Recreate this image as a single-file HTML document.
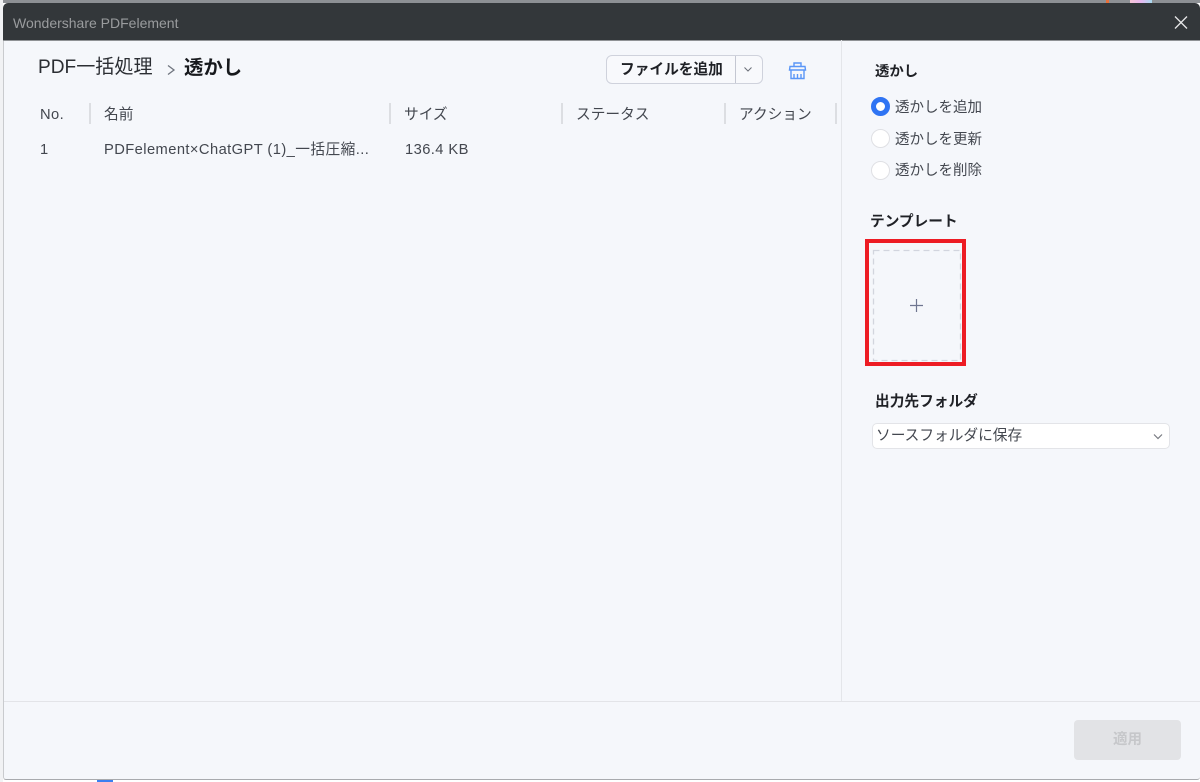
<!DOCTYPE html>
<html lang="ja"><head><meta charset="utf-8"><style>
html,body{margin:0;padding:0;background:#fff}
#r{position:relative;width:1200px;height:782px;overflow:hidden;background:#fff;font-family:"Liberation Sans","Noto Sans CJK JP",sans-serif}
#r div,#r svg{position:absolute}
.t{white-space:nowrap;line-height:20px;height:20px}
.g{color:#43474f;font-size:14.7px}
.l{letter-spacing:.43px}
.b{color:#1f2126;font-size:14.7px;font-weight:700}
.s{width:2px;height:21px;top:103px;background:#dcdee2}
.rd{left:871px;width:17px;height:17px;border-radius:50%;background:#fff;border:1px solid #dfe0e4}
</style></head><body><div id="r">
<div style="left:0;top:0;width:1200px;height:3px;background:#8d9094"></div>
<div style="left:1106px;top:0;width:3px;height:3px;background:#e8703a"></div>
<div style="left:1130px;top:0;width:22px;height:3px;background:linear-gradient(90deg,#f6c6d6,#e8b8f0,#a8dcf0)"></div>
<div style="left:0;top:58px;width:1px;height:34px;background:#3b7ff0"></div>
<div style="left:0;top:0;width:3px;height:782px;background:#f1f2f4"></div>
<div style="left:3px;top:3px;width:1197px;height:777px;background:#f5f7fb;border-left:1px solid #c9cbce;border-bottom:1px solid #a8aaae;box-sizing:border-box;border-radius:6px 6px 3px 3px;overflow:hidden"></div>
<div style="left:3px;top:3px;width:1197px;height:37px;background:#33373a;border-radius:5px 5px 0 0;border-bottom:1px solid #8f9295;box-sizing:content-box"></div>
<div class="t" style="left:13px;top:13px;color:#9a9c9e;font-size:14px">Wondershare PDFelement</div>
<svg style="left:1174px;top:16px" width="14" height="14" viewBox="0 0 14 14"><path d="M1 .5L13 12.5M13 .5L1 12.5" stroke="#e6e7e8" stroke-width="1.3" fill="none"/></svg>

<div class="t" style="left:38px;top:57px;color:#2b2e33;font-size:19.1px;line-height:22px;height:22px">PDF一括処理</div>
<svg style="left:166px;top:63px" width="10" height="13" viewBox="0 0 10 13"><path d="M2 2.5L8 7L2 11.5" stroke="#70757f" stroke-width="1.3" fill="none"/></svg>
<div class="t" style="left:184px;top:57px;color:#17191d;font-size:19.4px;font-weight:700;line-height:22px;height:22px">透かし</div>

<div style="left:606px;top:55px;width:157px;height:29px;box-sizing:border-box;background:#f8f9fc;border:1.5px solid #cfd2dc;border-radius:6px"></div>
<div style="left:735px;top:56px;width:1px;height:27px;background:#c4c7d2"></div>
<div class="t b" style="left:620px;top:60px">ファイルを追加</div>
<svg style="left:743px;top:66px" width="10" height="7" viewBox="0 0 10 7"><path d="M1.5 1.5L5 5L8.5 1.5" stroke="#6b6f78" stroke-width="1" fill="none"/></svg>
<svg style="left:788px;top:61px" width="19" height="19" viewBox="0 0 19 19"><path d="M6 5.5V2H13V5.5M2 5.5H17L17.5 9H1.5ZM3 9V17.5H16V9M6 13V17.5M9.5 13V17.5M13 13V17.5" stroke="#5a96f7" stroke-width="1.4" fill="none"/></svg>

<div class="t g" style="left:40px;top:105px"><span class="l">No.</span></div><div class="s" style="left:89px"></div>
<div class="t g" style="left:104px;top:105px">名前</div><div class="s" style="left:389px"></div>
<div class="t g" style="left:404px;top:105px">サイズ</div><div class="s" style="left:561px"></div>
<div class="t g" style="left:576px;top:105px">ステータス</div><div class="s" style="left:724px"></div>
<div class="t g" style="left:739px;top:105px">アクション</div><div class="s" style="left:835px"></div>
<div class="t g" style="left:40px;top:140px">1</div>
<div class="t g l" style="left:104px;top:140px">PDFelement×ChatGPT (1)_一括圧縮...</div>
<div class="t g l" style="left:405px;top:140px">136.4 KB</div>

<div style="left:841px;top:40px;width:1px;height:661px;background:#e4e6ea"></div>
<div class="t b" style="left:875px;top:62px;font-size:14.4px">透かし</div>
<div style="left:871px;top:97px;width:19px;height:19px;box-sizing:border-box;border-radius:50%;background:#fff;border:5px solid #2f74f3"></div>
<div class="t g" style="left:895px;top:98px;font-size:14.5px">透かしを追加</div>
<div class="rd" style="top:129px"></div>
<div class="t g" style="left:895px;top:130px;font-size:14.5px">透かしを更新</div>
<div class="rd" style="top:161px"></div>
<div class="t g" style="left:895px;top:161px;font-size:14.5px">透かしを削除</div>
<div class="t b" style="left:870px;top:212px">テンプレート</div>

<div style="left:865px;top:239px;width:101px;height:127px;box-sizing:border-box;border:4px solid #ed1c24"></div>
<svg style="left:872px;top:249px" width="90" height="113" viewBox="0 0 90 113"><rect x="1.5" y="1.5" width="87" height="110" fill="none" stroke="#d2d5de" stroke-width="1.3" stroke-dasharray="6 4"/></svg>
<svg style="left:909px;top:298px" width="15" height="15" viewBox="0 0 15 15"><path d="M7.5 1V14M1 7.5H14" stroke="#6f7690" stroke-width="1.2" fill="none"/></svg>

<div class="t b" style="left:875px;top:392px">出力先フォルダ</div>
<div style="left:872px;top:423px;width:298px;height:26px;box-sizing:border-box;background:#fff;border:1px solid #e3e4e8;border-radius:5px"></div>
<div class="t g" style="left:876px;top:426px">ソースフォルダに保存</div>
<svg style="left:1152px;top:432px" width="12" height="9" viewBox="0 0 12 9"><path d="M2 2.5L6 6.5L10 2.5" stroke="#777a80" stroke-width="1.2" fill="none"/></svg>

<div style="left:4px;top:701px;width:1196px;height:1px;background:#e3e4e8"></div>
<div style="left:1074px;top:720px;width:107px;height:40px;background:#e2e3e6;border-radius:4px"></div>
<div class="t" style="left:1113px;top:730px;color:#c6c7ca;font-size:14.5px;font-weight:700">適用</div>
<div style="left:97px;top:780px;width:16px;height:2px;background:#3b7ff0"></div>
</div></body></html>
